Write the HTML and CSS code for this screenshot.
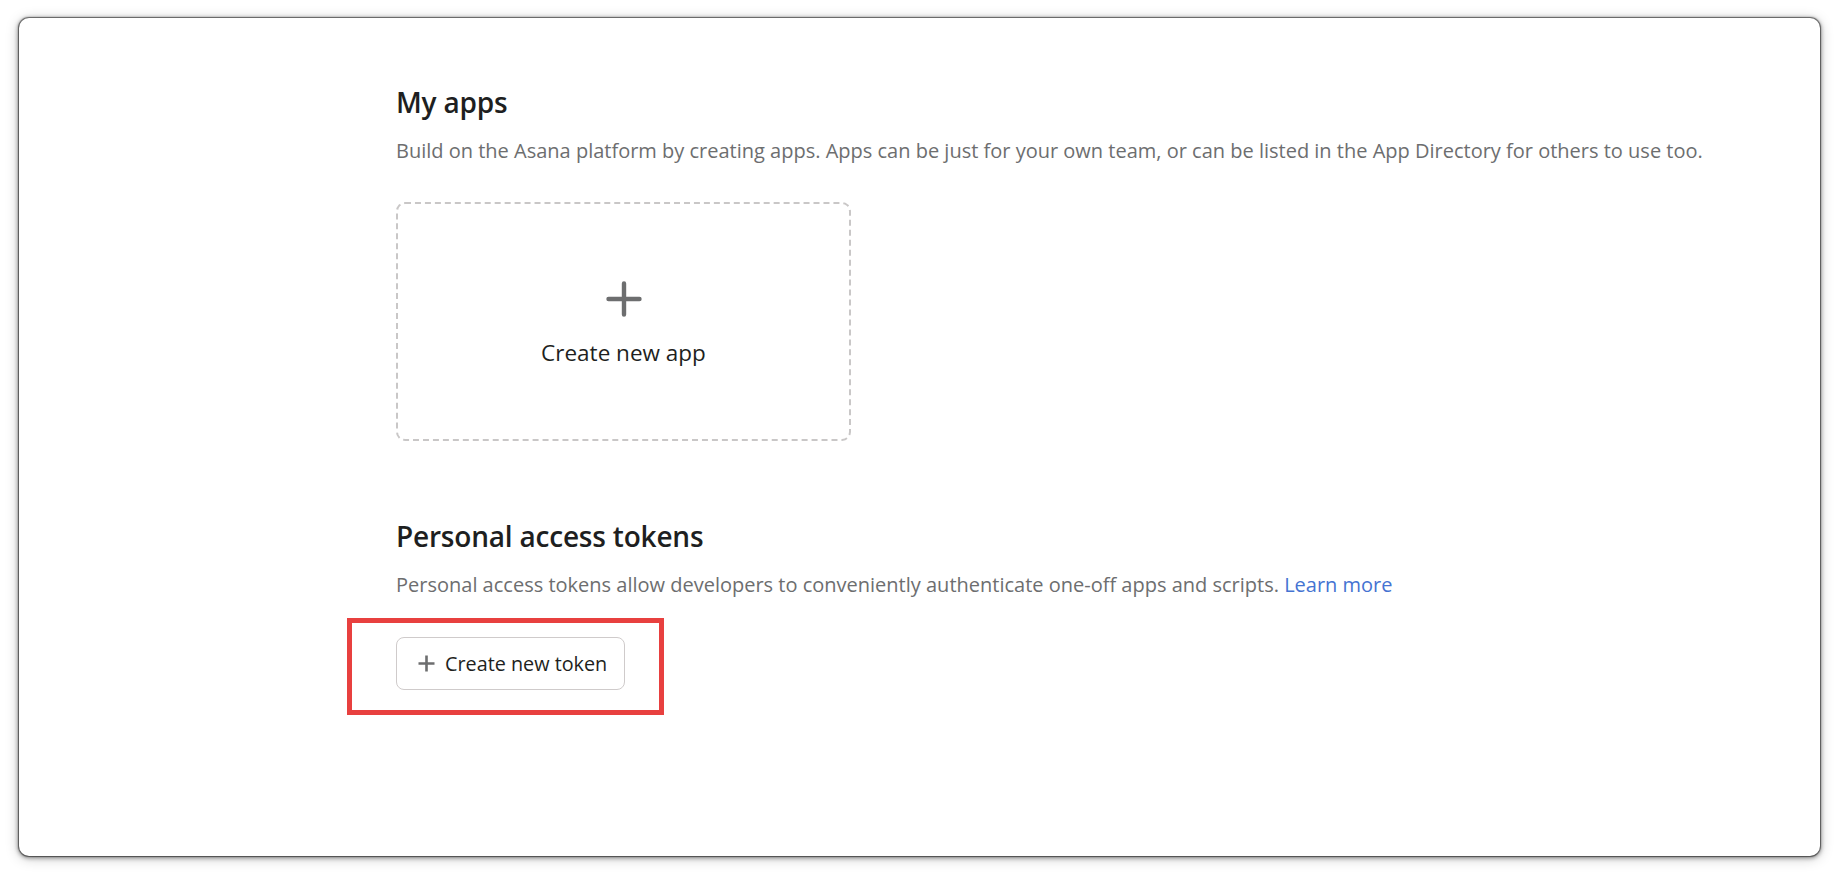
FILE: index.html
```html
<!DOCTYPE html>
<html lang="en">
<head>
<meta charset="utf-8">
<title>Developer console</title>
<link rel="stylesheet" href="styles.css">
</head>
<body>
<div class="window">
  <div class="content">
    <section class="section">
      <h2 class="title">My apps</h2>
      <p class="desc">Build on the Asana platform by creating apps. Apps can be just for your own team, or can be listed in the App Directory for others to use too.</p>
      <div class="new-app">
        <svg class="big-plus" width="36" height="36" viewBox="0 0 36 36" aria-hidden="true">
          <path d="M18 2.5V33.5M2.5 18H33.5" stroke="#6d6e6f" stroke-width="4.4" stroke-linecap="round" fill="none"/>
        </svg>
        <span class="new-app-label">Create new app</span>
      </div>
    </section>
    <section class="section tokens">
      <h2 class="title">Personal access tokens</h2>
      <p class="desc">Personal access tokens allow developers to conveniently authenticate one-off apps and scripts. <a class="link" href="#">Learn more</a></p>
      <div class="btn-wrap">
        <button class="btn" type="button">
          <svg class="small-plus" width="17" height="17" viewBox="0 0 17 17" aria-hidden="true">
            <path d="M8.5 0.5V16.5M0.5 8.5H16.5" stroke="#6d6e6f" stroke-width="2.6" fill="none"/>
          </svg>
          <span>Create new token</span>
        </button>
        <div class="highlight"></div>
      </div>
    </section>
  </div>
</div>
</body>
</html>
```

FILE: styles.css
```css
html, body {
  margin: 0;
  padding: 0;
  background: #ffffff;
}

body {
  font-family: "Open Sans", "Noto Sans", Arial, sans-serif;
  color: #1e1f21;
  padding: 18px 0 0 19px;
  height: 875px;
  box-sizing: border-box;
  overflow: hidden;
}

.window {
  width: 1801px;
  height: 838px;
  background: #ffffff;
  border-radius: 10px;
  box-shadow: 0 0 1px 1px rgba(0, 0, 0, 0.5), 0 1px 4px 1px rgba(0, 0, 0, 0.4), 0 2px 14px rgba(0, 0, 0, 0.22);
  box-sizing: border-box;
}

.content {
  padding: 67px 0 0 377px;
}

.section {
  display: flex;
  flex-direction: column;
  align-items: flex-start;
}

.tokens {
  margin-top: 78px;
}

.title {
  margin: 0;
  font-size: 28px;
  line-height: 34px;
  font-weight: 600;
  color: #1e1f21;
  letter-spacing: -0.2px;
}

.desc {
  margin: 19px 0 0;
  font-size: 20px;
  line-height: 26px;
  color: #6d6e6f;
  font-weight: 400;
}

.link {
  color: #4573d2;
  text-decoration: none;
}

.new-app {
  margin-top: 38px;
  width: 455px;
  height: 239px;
  box-sizing: border-box;
  border: 2px dashed #c9c7c7;
  border-radius: 9px;
  display: flex;
  flex-direction: column;
  align-items: center;
  justify-content: center;
  gap: 21px;
  padding-top: 5px;
}

.big-plus {
  display: block;
}

.new-app-label {
  font-size: 22.5px;
  line-height: 30px;
  color: #1e1f21;
}

.btn-wrap {
  position: relative;
  margin-top: 39px;
}

.btn {
  display: flex;
  align-items: center;
  gap: 10px;
  height: 53px;
  width: 229px;
  box-sizing: border-box;
  padding: 0 0 0 21px;
  background: #ffffff;
  border: 1px solid #cfcbcb;
  border-radius: 8px;
  font-family: inherit;
  font-size: 19.8px;
  color: #1e1f21;
  cursor: pointer;
  white-space: nowrap;
}

.small-plus {
  display: block;
  flex: none;
}

.highlight {
  position: absolute;
  left: -49px;
  top: -19px;
  width: 317px;
  height: 97px;
  box-sizing: border-box;
  border: 5px solid #e8403f;
  pointer-events: none;
}
```
